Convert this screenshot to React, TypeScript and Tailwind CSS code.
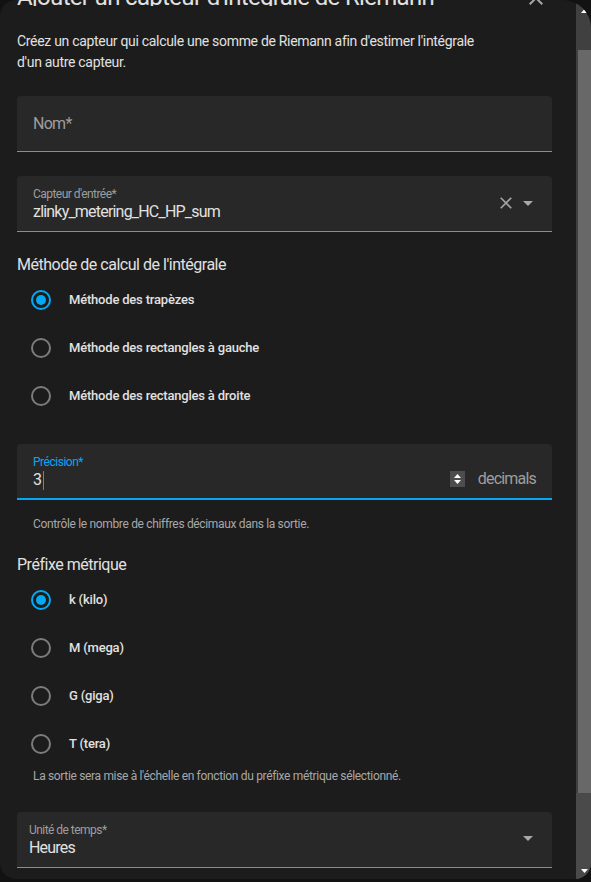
const methods = [
  { label: "Méthode des trapèzes", checked: true },
  { label: "Méthode des rectangles à gauche", checked: false },
  { label: "Méthode des rectangles à droite", checked: false },
];

const prefixes = [
  { label: "k (kilo)", checked: true },
  { label: "M (mega)", checked: false },
  { label: "G (giga)", checked: false },
  { label: "T (tera)", checked: false },
];

function Radio({ label, checked }: { label: string; checked: boolean }) {
  return (
    <div className="flex h-[48px] items-center pl-[4px]">
      <div className="flex h-[40px] w-[40px] items-center justify-center">
        <div
          className={`flex h-[20px] w-[20px] items-center justify-center rounded-full border-2 ${
            checked ? "border-[#03a9f4]" : "border-[#7c7c7c]"
          }`}
        >
          {checked && <div className="h-[10px] w-[10px] rounded-full bg-[#03a9f4]" />}
        </div>
      </div>
      <span className="ml-[8px] text-[13px] font-medium tracking-[-0.015em] text-[#e1e1e1]">{label}</span>
    </div>
  );
}

function Caret() {
  return (
    <svg width="10" height="5" viewBox="0 0 10 5" className="shrink-0">
      <path d="M0 0 L10 0 L5 5 Z" fill="#a8a8a8" />
    </svg>
  );
}

function ClearIcon() {
  return (
    <svg width="12" height="12" viewBox="0 0 12 12" className="shrink-0">
      <path d="M0.7 0.7 L11.3 11.3 M11.3 0.7 L0.7 11.3" stroke="#a4a4a4" strokeWidth="1.6" />
    </svg>
  );
}

function Triangle({ up }: { up?: boolean }) {
  return (
    <svg width="7" height="4" viewBox="0 0 7 4">
      <path d={up ? "M0 4 L7 4 L3.5 0 Z" : "M0 0 L7 0 L3.5 4 Z"} fill="#ffffff" />
    </svg>
  );
}

export default function App() {
  return (
    <div className="h-[882px] w-[591px] overflow-hidden bg-[#121212] font-['Roboto',sans-serif]">
      <div className="flex h-[879px] overflow-hidden rounded-tl-[16px] rounded-tr-[28px] rounded-b-[16px] bg-[#1c1c1c]">
        <div className="flex flex-1 flex-col pl-[17px] pr-[24px]">
          {/* clipped header */}
          <div className="flex h-[6px] items-start justify-between overflow-hidden">
            <div className="-mt-[15px] whitespace-nowrap text-[24px] leading-none tracking-[-0.028em] text-[#e1e1e1]">
              Ajouter un capteur d'intégrale de Riemann
            </div>
            <svg width="24" height="24" viewBox="0 0 24 24" className="-mt-[14px] mr-[4px]">
              <path
                d="M19 6.41 17.59 5 12 10.59 6.41 5 5 6.41 10.59 12 5 17.59 6.41 19 12 13.41 17.59 19 19 17.59 13.41 12z"
                fill="#a8a8a8"
              />
            </svg>
          </div>

          <p className="mt-[25px] max-w-[470px] text-[14px] leading-[21px] tracking-[-0.022em] text-[#e1e1e1]">
            Créez un capteur qui calcule une somme de Riemann afin d'estimer l'intégrale d'un autre
            capteur.
          </p>

          <div className="mt-[23px] flex h-[56px] items-center rounded-t-[4px] border-b border-[#8c8c8c] bg-[#282828] px-[16px]">
            <span className="text-[16px] tracking-[-0.045em] text-[#9e9e9e]">Nom*</span>
          </div>

          <div className="mt-[24px] flex h-[56px] items-start rounded-t-[4px] border-b border-[#8c8c8c] bg-[#282828] pl-[16px] pr-[19px]">
            <div className="flex flex-1 flex-col pt-[10px]">
              <span className="text-[12px] leading-[16px] tracking-[-0.045em] text-[#9e9e9e]">Capteur d'entrée*</span>
              <span className="text-[16px] leading-[20px] tracking-[-0.05em] text-[#e1e1e1]">
                zlinky_metering_HC_HP_sum
              </span>
            </div>
            <div className="flex h-[56px] items-center gap-[11px] pb-[2px]">
              <ClearIcon />
              <Caret />
            </div>
          </div>

          <div className="mt-[21px] text-[16px] leading-[23px] tracking-[-0.03em] text-[#e1e1e1]">
            Méthode de calcul de l'intégrale
          </div>
          <div className="flex flex-col">
            {methods.map((m) => (
              <Radio key={m.label} label={m.label} checked={m.checked} />
            ))}
          </div>

          <div className="mt-[24px] flex h-[56px] items-start rounded-t-[4px] border-b-2 border-[#03a9f4] bg-[#282828] pl-[16px] pr-[16px]">
            <div className="flex flex-1 flex-col pt-[10px]">
              <span className="text-[12px] leading-[16px] tracking-[-0.04em] text-[#03a9f4]">Précision*</span>
              <span className="flex items-center text-[16px] leading-[20px] text-[#e1e1e1]">
                3<span className="ml-[1px] h-[19px] w-[1px] bg-[#03a9f4]" />
              </span>
            </div>
            <div className="flex h-[54px] items-center pt-[16px]">
              <div className="flex h-[16px] w-[15px] flex-col items-center justify-center gap-[2px] bg-[#4d4d4d]">
                <Triangle up />
                <Triangle />
              </div>
              <span className="ml-[13px] text-[16px] leading-[20px] tracking-[-0.05em] text-[#9e9e9e]">decimals</span>
            </div>
          </div>
          <div className="mt-[16px] pl-[16px] text-[12px] leading-[16px] tracking-[-0.028em] text-[#a8a8a8]">
            Contrôle le nombre de chiffres décimaux dans la sortie.
          </div>

          <div className="mt-[21px] text-[16px] leading-[23px] tracking-[-0.03em] text-[#e1e1e1]">Préfixe métrique</div>
          <div className="flex flex-col">
            {prefixes.map((p) => (
              <Radio key={p.label} label={p.label} checked={p.checked} />
            ))}
          </div>
          <div className="pl-[16px] text-[12px] leading-[16px] tracking-[-0.028em] text-[#a8a8a8]">
            La sortie sera mise à l'échelle en fonction du préfixe métrique sélectionné.
          </div>

          <div className="mt-[28px] flex h-[56px] items-start rounded-t-[4px] border-b border-[#8c8c8c] bg-[#282828] pl-[12px] pr-[19px]">
            <div className="flex flex-1 flex-col pt-[10px]">
              <span className="text-[12px] leading-[16px] tracking-[-0.045em] text-[#9e9e9e]">Unité de temps*</span>
              <span className="text-[16px] leading-[20px] tracking-[-0.05em] text-[#e1e1e1]">Heures</span>
            </div>
            <div className="flex h-[55px] items-center pb-[2px]">
              <Caret />
            </div>
          </div>
        </div>

        {/* scrollbar */}
        <div className="flex w-[15px] flex-col bg-[#404040]">
          <div className="flex h-[18px] items-end justify-center pb-[5px] pl-[2px]">
            <Triangle up />
          </div>
          <div className="h-[32px]" />
          <div className="ml-[2px] h-[743px] bg-[#686868]" />
          <div className="flex flex-1 items-end justify-center bg-[#4a4a4a] pb-[6px] pl-[2px]">
            <Triangle />
          </div>
        </div>
      </div>
    </div>
  );
}
